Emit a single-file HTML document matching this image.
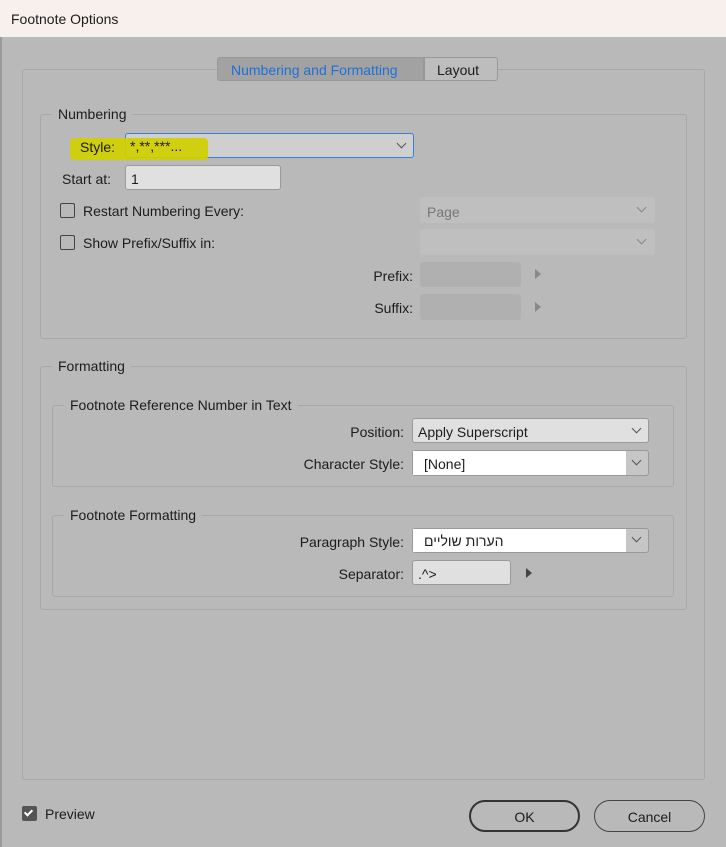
<!DOCTYPE html>
<html><head><meta charset="utf-8"><style>
*{margin:0;padding:0;box-sizing:border-box}
body{width:726px;height:847px;background:#b9b9b9;font-family:"Liberation Sans","Noto Sans CJK SC",sans-serif;font-size:14px;color:#1c1c1c;position:relative;overflow:hidden}
.a{position:absolute}
.t{position:absolute;line-height:16px;white-space:nowrap}
.grp{position:absolute;border:1px solid #a8a8a8;border-radius:3px}
.lbl{position:absolute;background:#b9b9b9;padding:0 6px;line-height:16px}
.box{position:absolute;border-radius:3px}
.chev{position:absolute;width:7px;height:7px;border-right:1px solid #555;border-bottom:1px solid #555;transform:rotate(45deg)}
.cb{position:absolute;width:15px;height:15px;border:1px solid #444;border-radius:2px}
.tri{position:absolute;width:0;height:0;border-top:5px solid transparent;border-bottom:5px solid transparent;border-left:6px solid #444}
.r{text-align:right}
</style></head><body>
<div class="a" style="left:0;top:0;width:726px;height:37px;background:#f8f0ed"></div>
<div class="t" style="left:11px;top:11px;font-size:14px">Footnote Options</div>
<div class="a" style="left:0;top:37px;width:2px;height:810px;background:#9a9a9a"></div>

<div class="grp" style="left:22px;top:69px;width:683px;height:711px"></div>
<div class="a" style="left:217px;top:57px;width:207px;height:24px;background:#a2a2a2;border:1px solid #999;border-radius:3px 0 0 3px"></div>
<div class="t" style="left:231px;top:62px;color:#1f6fd8">Numbering and Formatting</div>
<div class="a" style="left:424px;top:57px;width:74px;height:24px;background:#bdbdbd;border:1px solid #999;border-radius:0 3px 3px 0"></div>
<div class="t" style="left:437px;top:62px">Layout</div>

<div class="grp" style="left:40px;top:114px;width:647px;height:225px"></div>
<div class="lbl" style="left:52px;top:106px">Numbering</div>
<div class="box" style="left:125px;top:133px;width:289px;height:25px;background:#cfcfcf;border:1px solid #3b7fd4"></div>
<div class="a" style="left:70px;top:138px;width:138px;height:22px;background:#d0cf00;opacity:0.92;border-radius:4px"></div>
<div class="t" style="left:80px;top:139px">Style:</div>
<div class="t" style="left:130px;top:138px">*,**,***...</div>
<div class="chev" style="left:398px;top:140px"></div>
<div class="t" style="left:62px;top:171px">Start at:</div>
<div class="box" style="left:125px;top:165px;width:156px;height:25px;background:#e0e0e0;border:1px solid #999"></div>
<div class="t" style="left:131px;top:171px">1</div>
<div class="cb" style="left:60px;top:203px"></div>
<div class="t" style="left:83px;top:203px">Restart Numbering Every:</div>
<div class="box" style="left:420px;top:197px;width:235px;height:26px;background:#bfbfbf"></div>
<div class="t" style="left:427px;top:204px;color:#777">Page</div>
<div class="chev" style="left:638px;top:204px;border-color:#888"></div>
<div class="cb" style="left:60px;top:235px"></div>
<div class="t" style="left:83px;top:235px">Show Prefix/Suffix in:</div>
<div class="box" style="left:420px;top:229px;width:235px;height:26px;background:#bfbfbf"></div>
<div class="chev" style="left:638px;top:236px;border-color:#888"></div>
<div class="t r" style="left:300px;width:113px;top:268px">Prefix:</div>
<div class="box" style="left:420px;top:262px;width:101px;height:25px;background:#b0b0b0"></div>
<div class="tri" style="left:535px;top:269px;border-left-color:#888"></div>
<div class="t r" style="left:300px;width:113px;top:300px">Suffix:</div>
<div class="box" style="left:420px;top:294px;width:101px;height:26px;background:#b0b0b0"></div>
<div class="tri" style="left:535px;top:302px;border-left-color:#888"></div>

<div class="grp" style="left:40px;top:366px;width:647px;height:244px"></div>
<div class="lbl" style="left:52px;top:358px">Formatting</div>
<div class="grp" style="left:52px;top:405px;width:622px;height:82px"></div>
<div class="lbl" style="left:64px;top:397px">Footnote Reference Number in Text</div>
<div class="t r" style="left:250px;width:154px;top:424px">Position:</div>
<div class="box" style="left:412px;top:418px;width:237px;height:25px;background:#e0e0e0;border:1px solid #999"></div>
<div class="t" style="left:418px;top:424px">Apply Superscript</div>
<div class="chev" style="left:633px;top:425px"></div>
<div class="t r" style="left:250px;width:154px;top:456px">Character Style:</div>
<div class="box" style="left:412px;top:450px;width:237px;height:26px;background:#c6c6c6;border:1px solid #999"></div>
<div class="a" style="left:413px;top:451px;width:213px;height:24px;background:#fff"></div>
<div class="t" style="left:424px;top:456px">[None]</div>
<div class="chev" style="left:633px;top:457px"></div>
<div class="grp" style="left:52px;top:515px;width:622px;height:82px"></div>
<div class="lbl" style="left:64px;top:507px">Footnote Formatting</div>
<div class="t r" style="left:250px;width:154px;top:534px">Paragraph Style:</div>
<div class="box" style="left:412px;top:528px;width:237px;height:25px;background:#c6c6c6;border:1px solid #999"></div>
<div class="a" style="left:413px;top:529px;width:213px;height:23px;background:#fff"></div>
<div class="t" style="left:424px;top:533px;font-family:'Liberation Sans','DejaVu Sans',sans-serif" dir="rtl">הערות שוליים</div>
<div class="chev" style="left:633px;top:534px"></div>
<div class="t r" style="left:250px;width:154px;top:566px">Separator:</div>
<div class="box" style="left:412px;top:560px;width:99px;height:25px;background:#e0e0e0;border:1px solid #999"></div>
<div class="t" style="left:418px;top:566px">.^&gt;</div>
<div class="tri" style="left:526px;top:568px"></div>

<div class="a" style="left:22px;top:806px;width:15px;height:15px;background:#555;border-radius:2px"></div>
<div class="a" style="left:26px;top:808px;width:5px;height:8px;border-right:2px solid #fff;border-bottom:2px solid #fff;transform:rotate(45deg)"></div>
<div class="t" style="left:45px;top:806px">Preview</div>
<div class="a" style="left:469px;top:800px;width:111px;height:32px;border:2px solid #333;border-radius:16px"></div>
<div class="t" style="left:469px;width:111px;text-align:center;top:809px">OK</div>
<div class="a" style="left:594px;top:800px;width:111px;height:32px;border:1px solid #444;border-radius:16px"></div>
<div class="t" style="left:594px;width:111px;text-align:center;top:809px">Cancel</div>
</body></html>
